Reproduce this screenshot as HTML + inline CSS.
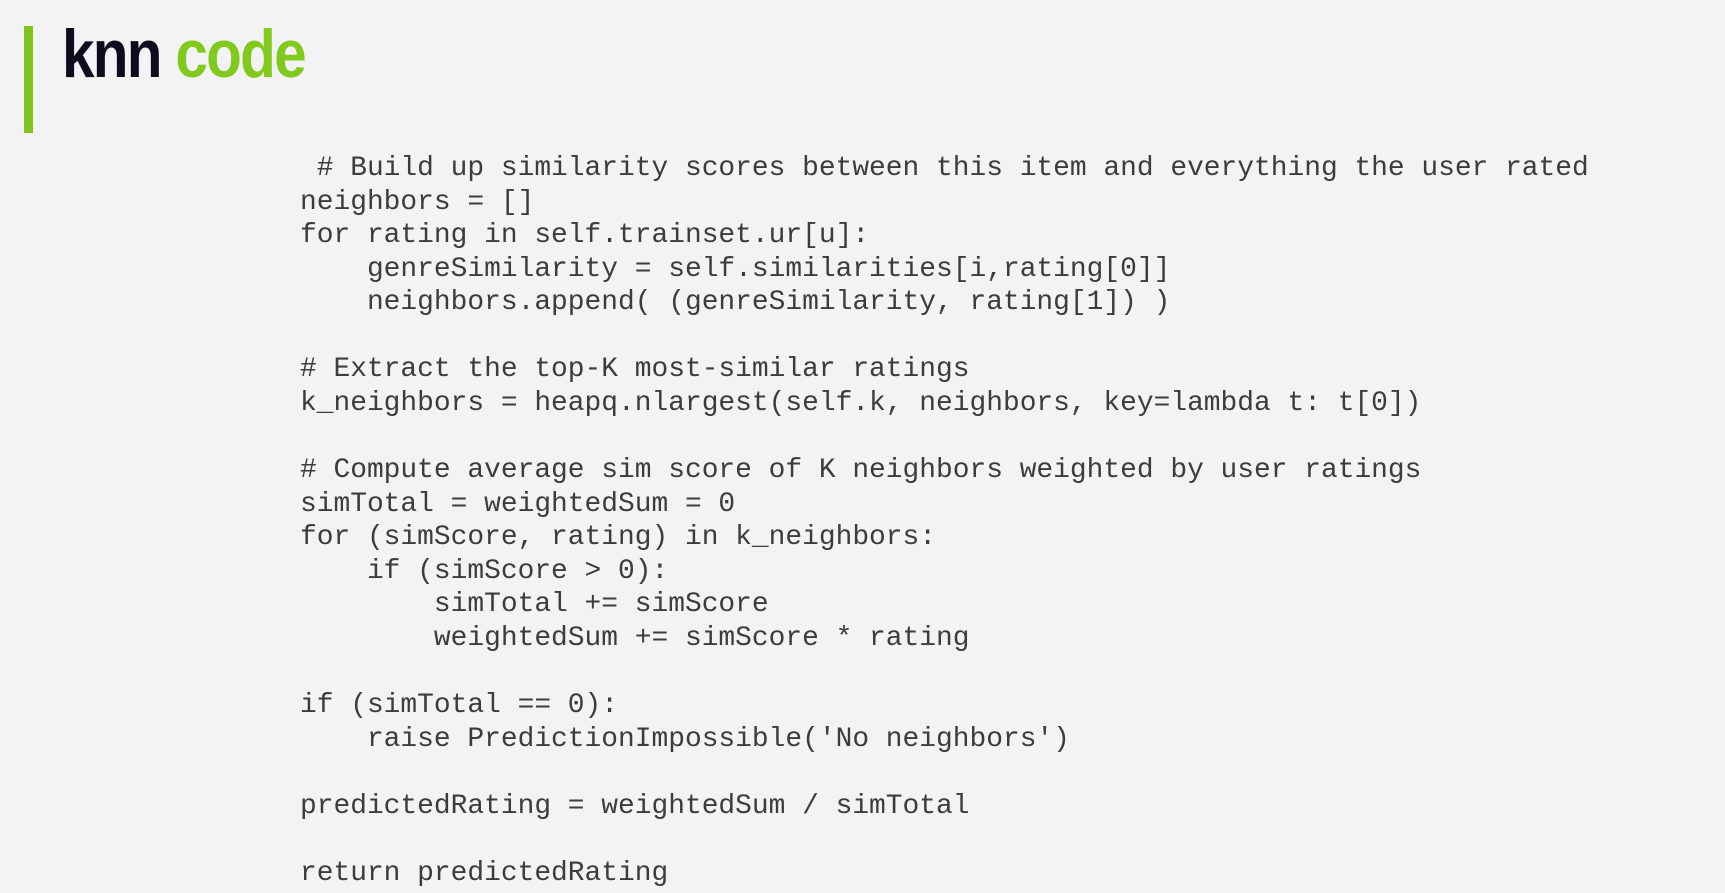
<!DOCTYPE html>
<html><head><meta charset="utf-8"><style>
html,body{margin:0;padding:0;}
body{width:1725px;height:893px;background:#f3f3f5;position:relative;overflow:hidden;}
.bar{position:absolute;left:24px;top:26px;width:9px;height:107px;background:#7fc31c;}
.title{position:absolute;left:62px;top:14px;font:bold 68px/80px "Liberation Sans",sans-serif;letter-spacing:-2px;transform:scaleX(0.86);transform-origin:left top;white-space:nowrap;color:#0f0c1d;}
.title span{color:#82c91e;}
pre{position:absolute;left:300px;top:152px;margin:0;font:27.9px/33.57px "Liberation Mono","Courier New",monospace;color:#3c3c3c;}
</style></head><body>
<div class="bar"></div>
<div class="title">knn <span>code</span></div>
<pre> # Build up similarity scores between this item and everything the user rated
neighbors = []
for rating in self.trainset.ur[u]:
    genreSimilarity = self.similarities[i,rating[0]]
    neighbors.append( (genreSimilarity, rating[1]) )

# Extract the top-K most-similar ratings
k_neighbors = heapq.nlargest(self.k, neighbors, key=lambda t: t[0])

# Compute average sim score of K neighbors weighted by user ratings
simTotal = weightedSum = 0
for (simScore, rating) in k_neighbors:
    if (simScore &gt; 0):
        simTotal += simScore
        weightedSum += simScore * rating

if (simTotal == 0):
    raise PredictionImpossible('No neighbors')

predictedRating = weightedSum / simTotal

return predictedRating</pre>
</body></html>
